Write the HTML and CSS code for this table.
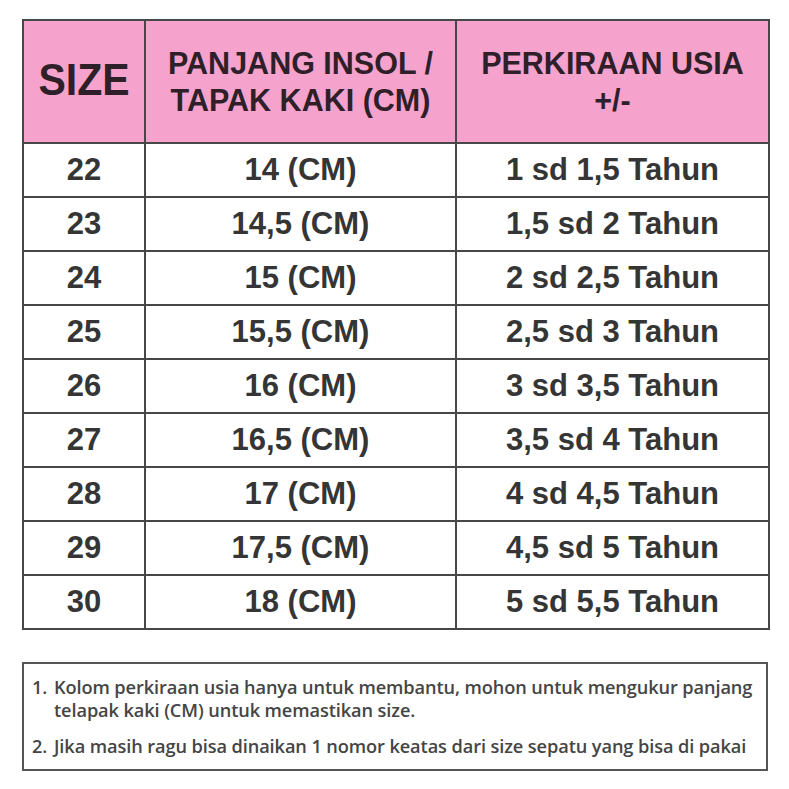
FILE: index.html
```html
<!DOCTYPE html>
<html>
<head>
<meta charset="utf-8">
<link rel="stylesheet" href="styles.css">
</head>
<body>
<div class="page">
  <table class="chart">
    <colgroup>
      <col class="c1"><col class="c2"><col class="c3">
    </colgroup>
    <thead>
      <tr>
        <th class="size-h"><span>SIZE</span></th>
        <th>PANJANG INSOL /<br>TAPAK KAKI (CM)</th>
        <th>PERKIRAAN USIA<br>+/-</th>
      </tr>
    </thead>
    <tbody>
      <tr><td>22</td><td>14 (CM)</td><td>1 sd 1,5 Tahun</td></tr>
      <tr><td>23</td><td>14,5 (CM)</td><td>1,5 sd 2 Tahun</td></tr>
      <tr><td>24</td><td>15 (CM)</td><td>2 sd 2,5 Tahun</td></tr>
      <tr><td>25</td><td>15,5 (CM)</td><td>2,5 sd 3 Tahun</td></tr>
      <tr><td>26</td><td>16 (CM)</td><td>3 sd 3,5 Tahun</td></tr>
      <tr><td>27</td><td>16,5 (CM)</td><td>3,5 sd 4 Tahun</td></tr>
      <tr><td>28</td><td>17 (CM)</td><td>4 sd 4,5 Tahun</td></tr>
      <tr><td>29</td><td>17,5 (CM)</td><td>4,5 sd 5 Tahun</td></tr>
      <tr><td>30</td><td>18 (CM)</td><td>5 sd 5,5 Tahun</td></tr>
    </tbody>
  </table>
  <div class="notes">
    <div class="note"><span class="num">1.</span><span class="txt">Kolom perkiraan usia hanya untuk membantu, mohon untuk mengukur panjang telapak kaki (CM) untuk memastikan size.</span></div>
    <div class="note"><span class="num">2.</span><span class="txt">Jika masih ragu bisa dinaikan 1 nomor keatas dari size sepatu yang bisa di pakai</span></div>
  </div>
</div>
</body>
</html>
```
FILE: styles.css
```css
html, body {
  margin: 0;
  padding: 0;
  background: #ffffff;
}
.page {
  width: 746px;
  padding: 19px 0 0 22px;
}
.chart {
  width: 746px;
  border-collapse: collapse;
  table-layout: fixed;
  font-family: "Liberation Sans", Arial, sans-serif;
  font-weight: bold;
  color: #353535;
}
.c1 { width: 122px; }
.c2 { width: 311px; }
.c3 { width: 313px; }
.chart th, .chart td {
  border: 2px solid #474747;
  text-align: center;
  padding: 0;
}
.chart th {
  background: #f5a2cc;
  color: #2e1f29;
  height: 121px;
  font-size: 30.5px;
  line-height: 37px;
}
.size-h span {
  display: inline-block;
  font-size: 41px;
  transform: scaleY(1.09);
}
.chart td {
  height: 52px;
  font-size: 31px;
  line-height: 30px;
}
.notes {
  margin-top: 32px;
  width: 742px;
  height: 105px;
  border: 2px solid #555555;
  font-family: "Open Sans", sans-serif;
  font-weight: 600;
  font-size: 18.2px;
  color: #454545;
  letter-spacing: -0.1px;
}
.note {
  display: flex;
  padding-left: 8px;
  line-height: 23px;
}
.note:first-child { padding-top: 12px; }
.note + .note { margin-top: 13px; }
.num { width: 22px; flex: none; }
.txt { flex: 1; padding-right: 0; }
```
